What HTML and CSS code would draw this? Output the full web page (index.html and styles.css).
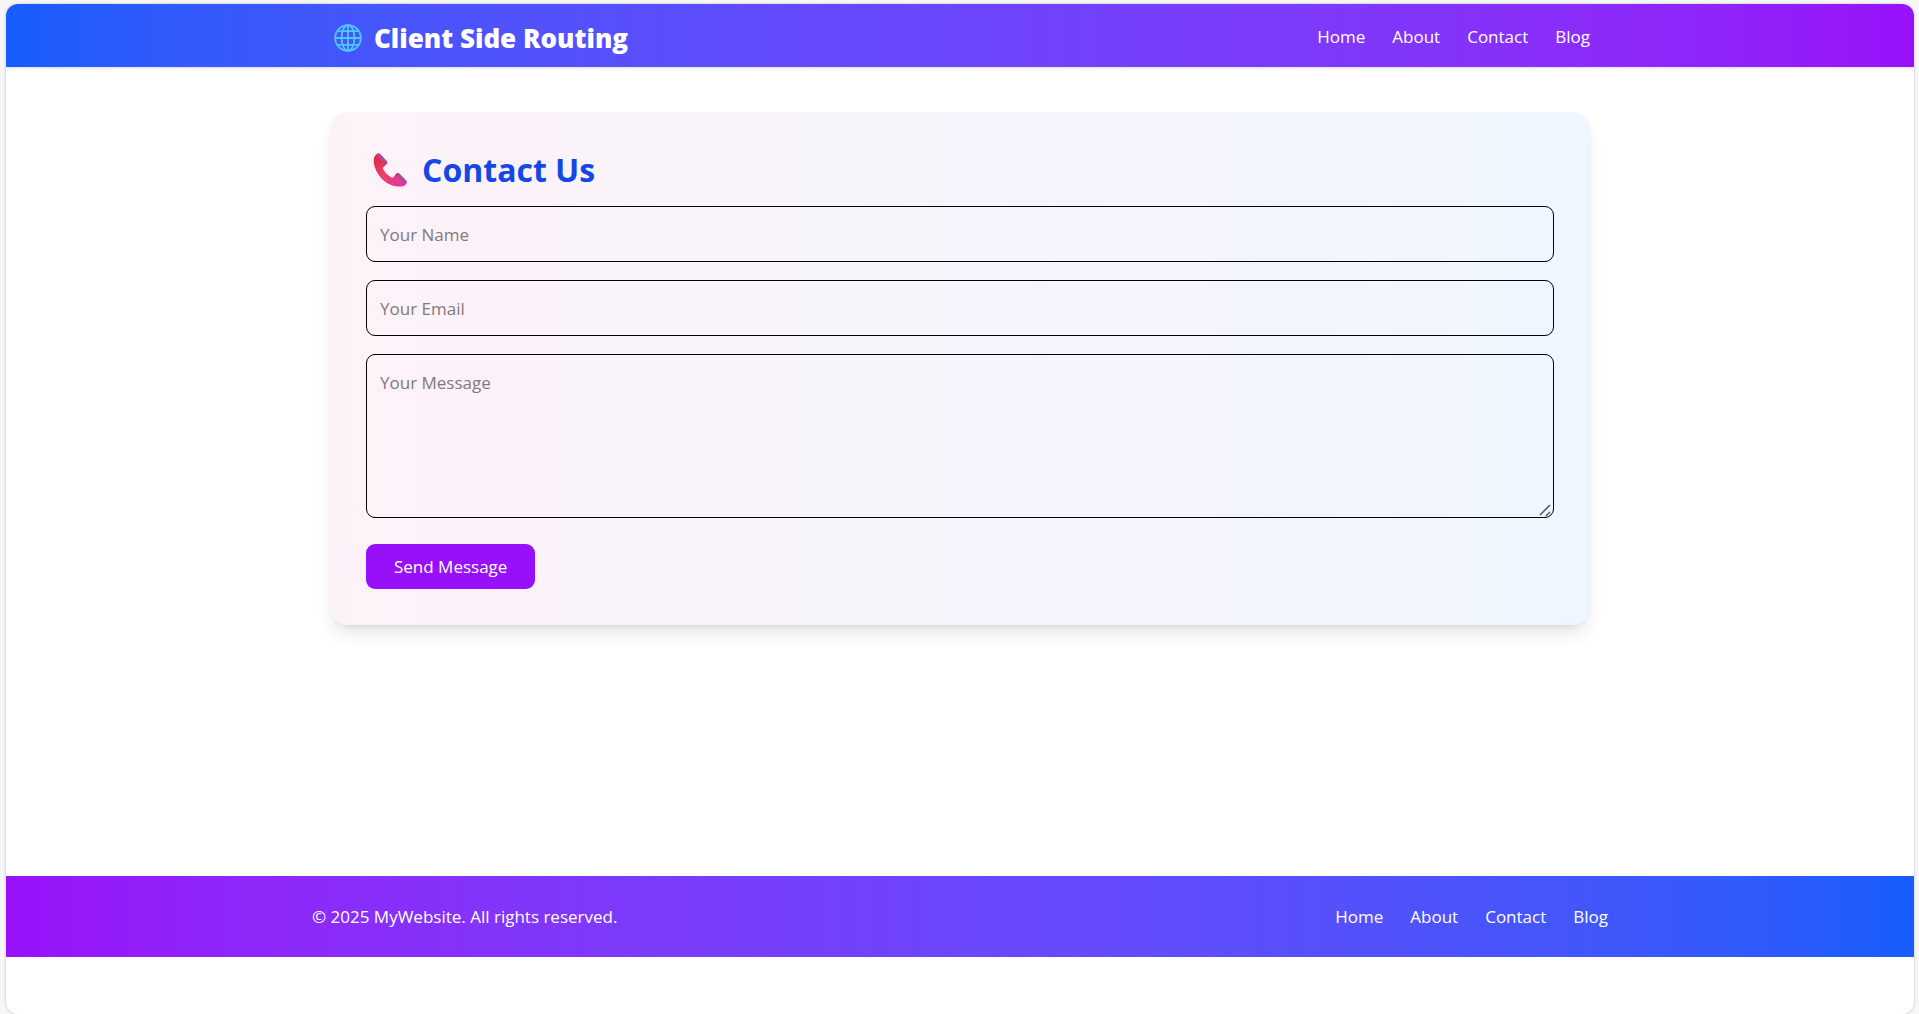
FILE: index.html
```html
<!DOCTYPE html>
<html lang="en">
<head>
  <meta charset="utf-8">
  <meta name="viewport" content="width=device-width, initial-scale=1">
  <title>Client Side Routing</title>
  <link rel="stylesheet" href="styles.css">
</head>
<body>
  <div class="page">
    <header class="site-header">
      <div class="header-inner">
        <h1 class="brand">
          <svg class="brand-icon" viewBox="0 0 28 28" aria-hidden="true">
            <g fill="none" stroke="currentColor" stroke-width="1.8">
              <circle cx="14" cy="14" r="12.8"/>
              <ellipse cx="14" cy="14" rx="6.4" ry="12.8"/>
              <path d="M14 1.2v25.6M1.2 14h25.6M3.6 7.2h20.8M3.6 20.8h20.8"/>
            </g>
          </svg>
          Client Side Routing
        </h1>
        <nav class="links" aria-label="Main">
          <a href="#home">Home</a>
          <a href="#about">About</a>
          <a href="#contact">Contact</a>
          <a href="#blog">Blog</a>
        </nav>
      </div>
    </header>

    <main class="content">
      <section class="card">
        <h2 class="card-title">
          <svg class="phone-icon" viewBox="0 0 34 34" aria-hidden="true">
            <defs>
              <linearGradient id="handset" x1="0" y1="0" x2="1" y2="1">
                <stop offset="0" stop-color="#dc2440"/>
                <stop offset="0.5" stop-color="#ec4270"/>
                <stop offset="1" stop-color="#e92fa4"/>
              </linearGradient>
              <linearGradient id="cap" x1="0" y1="1" x2="1" y2="0">
                <stop offset="0" stop-color="#d23a7c"/>
                <stop offset="1" stop-color="#8f56a8"/>
              </linearGradient>
            </defs>
            <path fill="url(#handset)" d="M4.5.5C1.500 2 .3 5.500.8 9.500 1.500 15.500 4.800 22 10 27c5.500 5 12.500 7 18.500 6.500 2.500-.2 4.500-1.500 5-3.500L23.500 20.500l-3 3.500c-.8.8-1.800.6-2.800 0-3-2-5.500-4.500-7.300-7.300-.6-1-.5-2 .2-2.700l3.400-3.200z"/>
            <path fill="url(#cap)" d="M4.500.5c1-.5 2-.3 2.800.5l6.700 7.200c.7.800.7 1.800 0 2.600l-1.400 1.200L4 2.500C3.500 1.800 3.700.9 4.500.5zM22.300 21.800l1.200-1.500c.7-.8 1.800-.8 2.600 0l6.900 6.900c1 1 1.200 2.300.3 3.300-.5.6-1.300.5-2-.1z"/>
          </svg>
          Contact Us
        </h2>
        <form class="contact-form">
          <input class="field" type="text" placeholder="Your Name" aria-label="Your Name">
          <input class="field" type="email" placeholder="Your Email" aria-label="Your Email">
          <textarea class="field message" placeholder="Your Message" aria-label="Your Message"></textarea>
          <button class="send" type="submit">Send Message</button>
        </form>
      </section>
    </main>

    <footer class="site-footer">
      <div class="footer-inner">
        <p class="copyright">© 2025 MyWebsite. All rights reserved.</p>
        <nav class="links" aria-label="Footer">
          <a href="#home">Home</a>
          <a href="#about">About</a>
          <a href="#contact">Contact</a>
          <a href="#blog">Blog</a>
        </nav>
      </div>
    </footer>
  </div>
</body>
</html>
```

FILE: styles.css
```css
* {
  box-sizing: border-box;
}

body {
  margin: 0;
  min-height: 100vh;
  padding: 4px 5px 0 6px;
  display: flex;
  background: #f7f7f7;
  color: #000;
  font-family: "Segoe UI", "Open Sans", "Noto Sans", sans-serif;
  font-size: 17px;
  line-height: 27px;
}

.page {
  flex: 1;
  min-width: 0;
  display: flex;
  flex-direction: column;
  padding-bottom: 57px;
  background: #fff;
  border-radius: 12px;
  box-shadow: 0 0 3px rgba(0, 0, 0, 0.25);
  overflow: hidden;
}

.site-header {
  background: linear-gradient(to right in oklab, #155dfc, #9810fa);
  color: #fff;
  box-shadow: 0 1px 3px rgba(0, 0, 0, 0.15);
}

.header-inner,
.footer-inner {
  max-width: 1296px;
  margin: 0 auto;
  display: flex;
  flex-wrap: wrap;
  align-items: center;
  justify-content: space-between;
}

.header-inner {
  padding: 12px 18px 11px;
}

.brand {
  display: flex;
  align-items: center;
  gap: 12px;
  margin: 0;
  padding: 4px 0 0 4px;
  font-size: 26px;
  font-weight: 800;
  line-height: 36px;
}

.brand-icon {
  width: 28px;
  height: 28px;
  color: #50c8ff;
}

.links {
  display: flex;
  flex-wrap: wrap;
  gap: 27px;
}

.links a {
  color: inherit;
  text-decoration: none;
}

.content {
  flex: 1;
  padding: 45px 18px;
}

.card {
  max-width: 1260px;
  margin: 0 auto;
  padding: 36px;
  border-radius: 18px;
  background: linear-gradient(to right in oklab, #fdf2f8, #eff6ff);
  box-shadow: 0 11px 17px -3px rgba(0, 0, 0, 0.1), 0 4px 7px -4px rgba(0, 0, 0, 0.1);
}

.card-title {
  display: flex;
  align-items: center;
  gap: 15px;
  margin: 0 0 18px;
  padding: 4px 0 0 7px;
  color: #1447e6;
  font-size: 32px;
  font-weight: 700;
  line-height: 36px;
}

.phone-icon {
  width: 34px;
  height: 34px;
}

.contact-form {
  display: flex;
  flex-direction: column;
  align-items: flex-start;
  gap: 18px;
}

.field {
  display: block;
  width: 100%;
  height: 56px;
  padding: 14px 13px;
  border: 1px solid #000;
  border-radius: 9px;
  background: transparent;
  color: inherit;
  font: inherit;
}

.field::placeholder {
  color: #7f7a7f;
}

.message {
  height: 164px;
  resize: vertical;
}

.message::-webkit-resizer {
  background: url("data:image/svg+xml,%3Csvg xmlns='http://www.w3.org/2000/svg' width='15' height='15'%3E%3Cpath d='M2 13L12 3M8 14l4-4' fill='none' stroke='%23555' stroke-width='1.500'/%3E%3C/svg%3E") no-repeat right bottom;
}

.send {
  margin-top: 8px;
  padding: 9px 28px;
  border: 0;
  border-radius: 9px;
  background: #9810fa;
  color: #fff;
  font: inherit;
}

.site-footer {
  padding: 27px 18px;
  background: linear-gradient(to right in oklab, #9810fa, #155dfc);
  color: #fff;
}

.copyright {
  margin: 0;
}
```
